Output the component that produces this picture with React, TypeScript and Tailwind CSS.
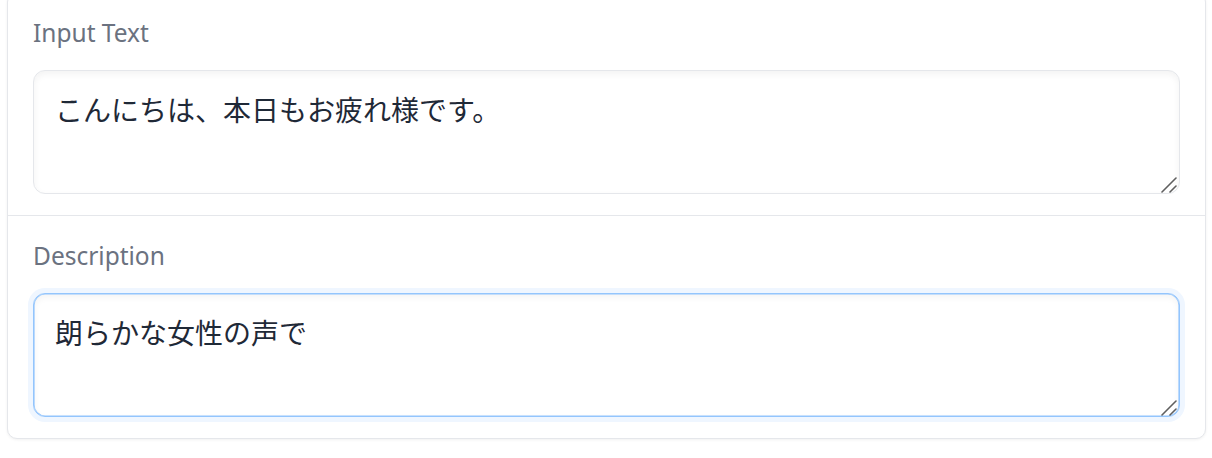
import React from "react";

function Grip() {
  return (
    <svg
      className="pointer-events-none absolute right-[3px] bottom-[1px]"
      width="16"
      height="16"
      viewBox="0 0 16 16"
      fill="none"
    >
      <line x1="1" y1="15" x2="15" y2="1" stroke="#5f5f5f" strokeWidth="1.6" strokeLinecap="round" />
      <line x1="9" y1="15" x2="15" y2="9" stroke="#5f5f5f" strokeWidth="1.6" strokeLinecap="round" />
    </svg>
  );
}

function Field({ label, value, focused }: { label: string; value: string; focused?: boolean }) {
  return (
    <div className="flex flex-col">
      <label className="block h-[36px] text-[24.5px] leading-[36px] text-[#6b7280] mb-[19px] font-['Noto_Sans',sans-serif]">
        {label}
      </label>
      <div className="relative">
        <textarea
          readOnly
          defaultValue={value}
          className={
            focused
              ? "block w-full h-[124px] resize-none rounded-[12px] border border-[#93c5fd] bg-white px-[21px] py-[17px] text-[28px] leading-[42px] text-[#1f2937] outline-none shadow-[0_0_0_5px_#eff6ff,inset_0_0_0_0.6px_#93c5fd,inset_0_3px_7px_rgba(0,0,0,0.05)] font-['Noto_Sans_CJK_JP','Noto_Sans',sans-serif]"
              : "block w-full h-[124px] resize-none rounded-[12px] border border-[#e5e7eb] bg-white px-[21px] py-[17px] text-[28px] leading-[42px] text-[#1f2937] outline-none shadow-[inset_0_3px_7px_rgba(0,0,0,0.05)] font-['Noto_Sans_CJK_JP','Noto_Sans',sans-serif]"
          }
        />
        <Grip />
      </div>
    </div>
  );
}

export default function App() {
  return (
    <div className="min-h-[458px] bg-white overflow-hidden">
      <div className="ml-[7px] mr-[6px] mt-[-8px] rounded-[10px] border border-[#e5e7eb] bg-white shadow-[0_1px_3px_rgba(0,0,0,0.06)]">
        <div className="px-[25px] pt-[22px] pb-[21px] border-b border-[#e5e7eb]">
          <Field label="Input Text" value="こんにちは、本日もお疲れ様です。" />
        </div>
        <div className="px-[25px] pt-[22px] pb-[21px]">
          <Field label="Description" value="朗らかな女性の声で" focused />
        </div>
      </div>
    </div>
  );
}
